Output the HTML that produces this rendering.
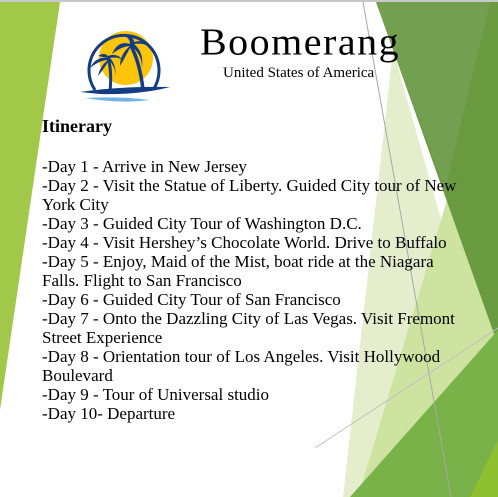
<!DOCTYPE html>
<html><head><meta charset="utf-8"><style>
html,body{margin:0;padding:0;}
body{width:498px;height:497px;position:relative;overflow:hidden;background:#fff;font-family:"Liberation Serif",serif;color:#000;}
svg.bg{position:absolute;left:0;top:0;}
.title{position:absolute;left:200px;top:22px;font-size:40px;letter-spacing:1.5px;font-family:"Liberation Serif",serif;line-height:1;transform:scaleY(0.95);}
.sub{position:absolute;left:223px;top:66px;font-size:15px;line-height:1;}
.h{position:absolute;left:42px;top:116px;font-size:18px;font-weight:bold;line-height:20px;}
.body{position:absolute;left:42px;top:157px;font-size:17px;line-height:19px;white-space:nowrap;}
</style></head><body>
<svg class="bg" width="498" height="497" viewBox="0 0 498 497">
<rect x="0" y="0" width="498" height="2" fill="#c8c8c8"/>
<polygon points="0,2 60,2 0,410" fill="#a2c84a"/>
<polygon points="393,50 498,420 498,497 343,497" fill="#e4eecd"/>
<polygon points="480,90 498,60 498,497 358,497" fill="#cfe3a0"/>
<polygon points="376,2 498,2 498,345" fill="#6a9a40"/>
<polygon points="376,2 490,2 445,190" fill="#73a050"/>
<polygon points="350,497 498,330 498,497" fill="#79b249"/>
<polygon points="470,497 498,440 498,497" fill="#8dbf2f"/>
<line x1="363" y1="2" x2="451" y2="497" stroke="#a8a8a8" stroke-width="1"/>
<line x1="315" y1="448" x2="498" y2="328" stroke="#c0c0c0" stroke-width="1"/>
<circle cx="126" cy="58" r="27" fill="#fcc40a"/>
<path d="M95,90 A35,35 0 1 1 153,90" fill="none" stroke="#123d82" stroke-width="3"/>
<path d="M80,92 Q120,86 170,87 Q140,95 100,94 Z" fill="#123d82"/>
<path d="M85,98 Q120,96 150,100 Q120,104 85,98 Z" fill="#6fb4e4"/>
<path d="M110,92 Q112,70 108,58" stroke="#123d82" stroke-width="3" fill="none"/>
<path d="M143,90 Q140,62 130,44" stroke="#123d82" stroke-width="3.5" fill="none"/>
<path d="M108,58 Q96,56 90,68 Q100,60 108,60 Q100,66 98,76 Q106,66 109,60 Q116,68 116,78 Q116,64 110,58 Q120,56 124,62 Q118,52 108,56 Q104,52 98,56 Z" fill="#123d82"/>
<path d="M130,44 Q118,40 112,54 Q122,46 130,46 Q120,54 120,66 Q128,52 131,46 Q142,54 142,68 Q144,52 134,44 Q148,42 154,52 Q148,38 134,42 Q134,36 124,36 Q130,38 130,44 Z" fill="#123d82"/>
</svg>
<div class="title">Boomerang</div>
<div class="sub">United States of America</div>
<div class="h">Itinerary</div>
<div class="body">-Day 1 - Arrive in New Jersey<br>-Day 2 - Visit the Statue of Liberty. Guided City tour of New<br>York City<br>-Day 3 - Guided City Tour of Washington D.C.<br>-Day 4 - Visit Hershey’s Chocolate World. Drive to Buffalo<br>-Day 5 - Enjoy, Maid of the Mist, boat ride at the Niagara<br>Falls. Flight to San Francisco<br>-Day 6 - Guided City Tour of San Francisco<br>-Day 7 - Onto the Dazzling City of Las Vegas. Visit Fremont<br>Street Experience<br>-Day 8 - Orientation tour of Los Angeles. Visit Hollywood<br>Boulevard<br>-Day 9 - Tour of Universal studio<br>-Day 10- Departure</div>
</body></html>
